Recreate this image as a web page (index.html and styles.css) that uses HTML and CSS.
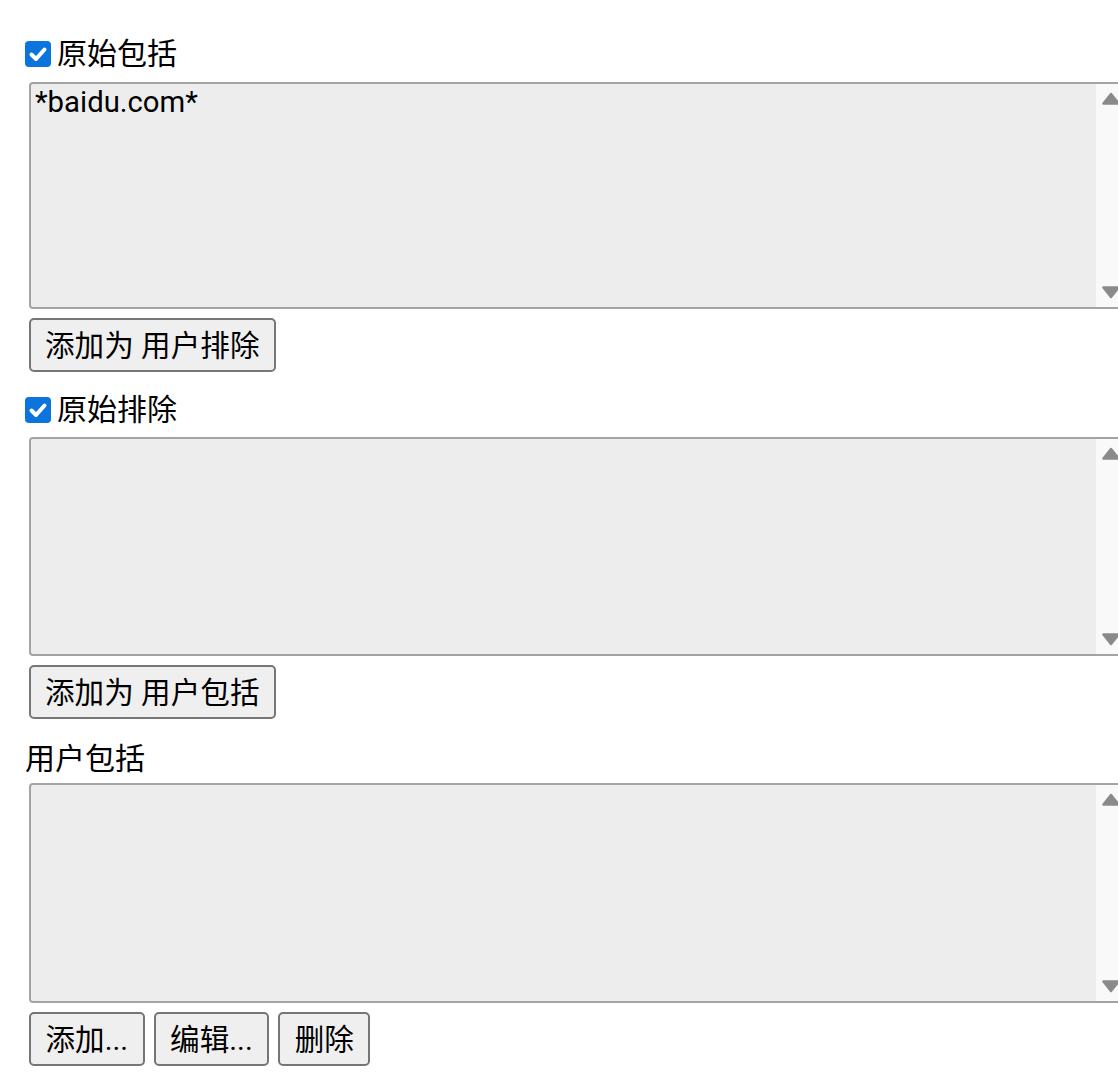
FILE: index.html
```html
<!DOCTYPE html>
<html lang="zh">
<head>
<meta charset="utf-8">
<title>规则</title>
<link rel="stylesheet" href="styles.css">
</head>
<body>
<div class="page">
  <label class="check-row">
    <span class="checkbox"><svg viewBox="0 0 26 26" width="26" height="26"><rect x="0" y="0" width="26" height="26" rx="4" fill="#0b75dd"/><path d="M6.5 13.5 L11 18 L19.5 8.5" fill="none" stroke="#fff" stroke-width="4" stroke-linecap="round" stroke-linejoin="round"/></svg></span>
    <span class="label-text">原始包括</span>
  </label>
  <div class="listbox first">
    <div class="list-content">*baidu.com*</div>
    <div class="scrollbar">
      <svg class="arrow" viewBox="0 0 18 13" width="18" height="13"><path d="M9 2 L16.5 11.5 L1.5 11.5 Z" fill="#8a8a8a" stroke="#8a8a8a" stroke-width="2.5" stroke-linejoin="round"/></svg>
      <svg class="arrow" viewBox="0 0 18 13" width="18" height="13"><path d="M1.5 1.5 L16.5 1.5 L9 11 Z" fill="#8a8a8a" stroke="#8a8a8a" stroke-width="2.5" stroke-linejoin="round"/></svg>
    </div>
  </div>
  <div class="btn-row">
    <button class="btn wide">添加为 用户排除</button>
  </div>

  <label class="check-row second">
    <span class="checkbox"><svg viewBox="0 0 26 26" width="26" height="26"><rect x="0" y="0" width="26" height="26" rx="4" fill="#0b75dd"/><path d="M6.5 13.5 L11 18 L19.5 8.5" fill="none" stroke="#fff" stroke-width="4" stroke-linecap="round" stroke-linejoin="round"/></svg></span>
    <span class="label-text">原始排除</span>
  </label>
  <div class="listbox">
    <div class="list-content"></div>
    <div class="scrollbar">
      <svg class="arrow" viewBox="0 0 18 13" width="18" height="13"><path d="M9 2 L16.5 11.5 L1.5 11.5 Z" fill="#8a8a8a" stroke="#8a8a8a" stroke-width="2.5" stroke-linejoin="round"/></svg>
      <svg class="arrow" viewBox="0 0 18 13" width="18" height="13"><path d="M1.5 1.5 L16.5 1.5 L9 11 Z" fill="#8a8a8a" stroke="#8a8a8a" stroke-width="2.5" stroke-linejoin="round"/></svg>
    </div>
  </div>
  <div class="btn-row">
    <button class="btn wide">添加为 用户包括</button>
  </div>

  <div class="plain-label">用户包括</div>
  <div class="listbox third">
    <div class="list-content"></div>
    <div class="scrollbar">
      <svg class="arrow" viewBox="0 0 18 13" width="18" height="13"><path d="M9 2 L16.5 11.5 L1.5 11.5 Z" fill="#8a8a8a" stroke="#8a8a8a" stroke-width="2.5" stroke-linejoin="round"/></svg>
      <svg class="arrow" viewBox="0 0 18 13" width="18" height="13"><path d="M1.5 1.5 L16.5 1.5 L9 11 Z" fill="#8a8a8a" stroke="#8a8a8a" stroke-width="2.5" stroke-linejoin="round"/></svg>
    </div>
  </div>
  <div class="btn-row">
    <button class="btn">添加...</button>
    <button class="btn">编辑...</button>
    <button class="btn">删除</button>
  </div>
</div>
</body>
</html>
```
FILE: styles.css
```css
html, body {
  margin: 0;
  padding: 0;
  background: #ffffff;
  overflow: hidden;
}

body {
  font-family: Roboto, "Noto Sans CJK SC", sans-serif;
  font-size: 30px;
  color: #000000;
}

.page {
  display: flex;
  flex-direction: column;
  align-items: flex-start;
  padding: 37px 0 0 25px;
}

.check-row {
  display: flex;
  align-items: center;
  gap: 6px;
  height: 34px;
}

.check-row.second {
  margin-top: 21px;
}

.checkbox {
  display: flex;
  width: 26px;
  height: 26px;
}

.label-text,
.plain-label {
  line-height: 34px;
}

.plain-label {
  height: 34px;
  margin-top: 23px;
}

.listbox {
  display: flex;
  box-sizing: border-box;
  width: 1099px;
  height: 219px;
  margin: 10px 0 0 4px;
  border: 2px solid #a3a3a3;
  border-radius: 4px;
  background: #ededed;
}

.listbox.first {
  height: 227px;
  margin-top: 11px;
}

.listbox.third {
  margin-top: 7px;
  height: 220px;
}

.list-content {
  flex: 1;
  padding: 1px 4px;
  font-size: 29.3px;
  line-height: 34px;
}

.scrollbar {
  flex-shrink: 0;
  width: 30px;
  display: flex;
  flex-direction: column;
  align-items: center;
  justify-content: space-between;
  padding: 8px 0 8px;
  background: #f9f9f9;
}

.arrow {
  display: block;
  flex-shrink: 0;
}

.btn-row {
  display: flex;
  gap: 9px;
  margin: 9px 0 0 4px;
}

.btn {
  box-sizing: border-box;
  height: 54px;
  padding: 3px 14.5px 0;
  border: 2px solid #767676;
  border-radius: 5px;
  background: #efefef;
  font-family: Roboto, "Noto Sans CJK SC", sans-serif;
  font-size: 29.6px;
  color: #000000;
  line-height: 1;
}

.btn.wide {
  padding: 3px 14px 0;
}
```
